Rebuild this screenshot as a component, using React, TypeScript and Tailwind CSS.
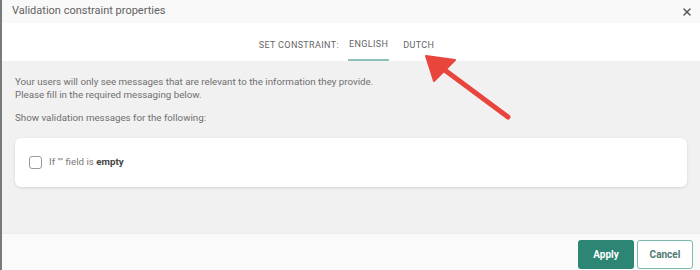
import { X } from 'lucide-react';

export default function App() {
    return (
        <div className="relative w-[700px] h-[270px] overflow-hidden bg-[#f1f1f1] border-l-2 border-[#7a7a7a] flex flex-col font-['Roboto',sans-serif]">
            {/* Header */}
            <div className="h-[23px] bg-[#f9f9f9] flex items-center justify-between pl-[10px] pr-[7px] shrink-0">
                <span className="text-[11px] text-[#616161]">Validation constraint properties</span>
                <X className="w-[12px] h-[12px] text-[#555]" strokeWidth={3} />
            </div>

            {/* Tabs */}
            <div className="h-[38px] bg-white flex items-end justify-center shrink-0 pr-[9px]">
                <div className="flex items-end text-[9px] tracking-[0.04em] text-[#666] uppercase">
                    <span className="pb-[9px] mr-[9px]">Set constraint:</span>
                    <span className="pb-[8px] px-[1px] border-b-2 border-[#8fc2b7]">English</span>
                    <span className="pb-[9px] ml-[14px]">Dutch</span>
                </div>
            </div>

            {/* Body */}
            <div className="flex-1 px-[13px] pt-[14px]">
                <p className="text-[9.75px] leading-[13px] text-[#6f6f6f]">
                    Your users will only see messages that are relevant to the information they provide.
                    <br />
                    Please fill in the required messaging below.
                </p>
                <p className="text-[9.75px] leading-[13px] text-[#6f6f6f] mt-[10px]">Show validation messages for the following:</p>
                <div className="mt-[14px] w-[672px] h-[49px] bg-white rounded-[6px] shadow-[0_1px_3px_rgba(0,0,0,0.12)] flex items-center pl-[14px] gap-[7px]">
                    <span className="w-[13px] h-[13px] rounded-[3px] border border-[#9a9a9a] bg-white" />
                    <span className="text-[9.75px] text-[#777]">
                        If "" field is <b className="font-bold text-[#444]">empty</b>
                    </span>
                </div>
            </div>

            {/* Footer */}
            <div className="h-[37px] bg-[#fafafa] border-t border-[#ececec] flex items-start justify-end gap-[3px] pt-[6px] pr-[7px] shrink-0">
                <button className="w-[56px] h-[29px] rounded-[3px] bg-[#2d8574] text-white text-[10px] font-bold">Apply</button>
                <button className="w-[56px] h-[29px] rounded-[3px] bg-white border border-[#7fb8ac] text-[#4f7a72] text-[10px] font-bold">Cancel</button>
            </div>

            {/* Annotation arrow */}
            <svg className="absolute left-0 top-0 pointer-events-none" width="700" height="270">
                <line x1="506" y1="117" x2="440" y2="68" stroke="#e8453c" strokeWidth="5" strokeLinecap="round" />
                <polygon points="424,56 453,60 432,81" fill="#e8453c" stroke="#e8453c" strokeWidth="2" strokeLinejoin="round" />
            </svg>
        </div>
    );
}
